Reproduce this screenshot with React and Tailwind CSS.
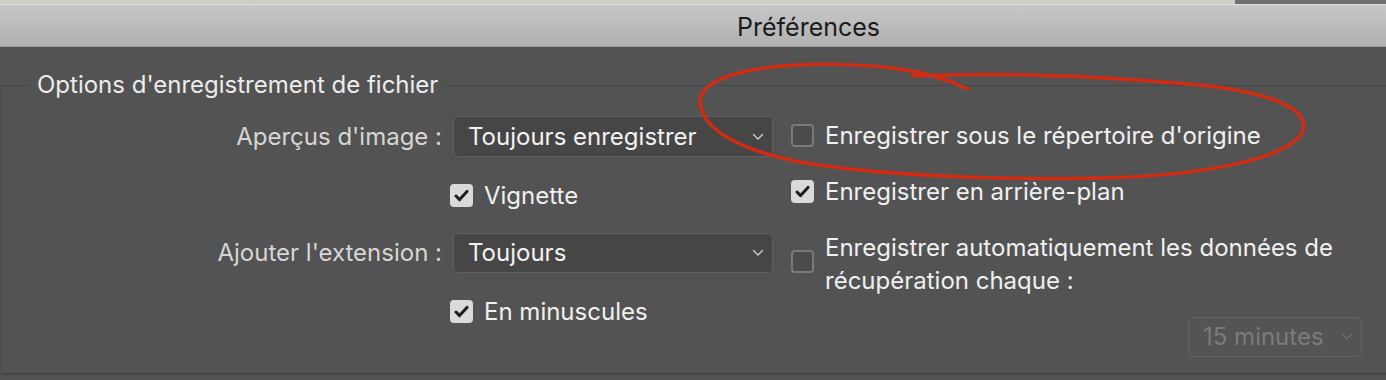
import React from 'react';

const Chevron = ({ className }) => (
  <svg width="12" height="8" viewBox="0 0 12 8" className={className} fill="none">
    <path d="M1.5 1.5l4.5 4.5 4.5-4.5" stroke="currentColor" strokeWidth="1.4" strokeLinecap="round" strokeLinejoin="round" />
  </svg>
);

const Checkbox = ({ checked }) =>
  checked ? (
    <div className="w-[23px] h-[23px] shrink-0 rounded-[4px] bg-[#dadada] flex items-center justify-center">
      <svg width="15" height="13" viewBox="0 0 15 13" fill="none">
        <path d="M2 7l3.6 3.6L13 2.4" stroke="#1e1e1e" strokeWidth="3" strokeLinecap="round" strokeLinejoin="round" />
      </svg>
    </div>
  ) : (
    <div className="w-[23px] h-[23px] shrink-0 rounded-[4px] bg-[#4b4b4b] border-2 border-[#7a7a7a]" />
  );

const Select = ({ value, disabled, className }) => (
  <div
    className={`flex items-center justify-between rounded-[5px] border ${
      disabled ? 'border-[#636363] bg-[#545454] text-[#7b7b7b]' : 'border-[#5f5f5f] bg-[#464646] text-[#f2f2f2]'
    } pl-[14px] pr-[8px] ${className}`}
  >
    <span className="leading-none">{value}</span>
    <Chevron className={disabled ? 'text-[#6c6c6c]' : 'text-[#cfcfcf]'} />
  </div>
);

export default function App() {
  return (
    <div className="relative w-[1386px] h-[380px] overflow-hidden bg-[#535353] font-['Inter','Liberation_Sans',sans-serif] text-[24px]">
      <div className="flex h-[4px]">
        <div className="w-[1235px] bg-[#cfcfca]" />
        <div className="flex-1 bg-[#717171]" />
      </div>
      <div className="h-[43px] border-t border-b border-t-[#e0e0e0] border-b-[#9a9a9a] bg-gradient-to-b from-[#c7c7c7] to-[#b0b0b0] flex items-center pl-[737px] pt-[3px]">
        <span className="text-[#1b1b1b] text-[25px] leading-none">Préférences</span>
      </div>

      <fieldset className="ml-[1px] mt-[23px] w-[1400px] h-[305px] border border-b-2 border-[#454545] p-0 m-0">
        <legend className="ml-[27px] px-[8px] leading-[30px] text-[#ececec] text-[24px]">
          Options d'enregistrement de fichier
        </legend>

        <div className="flex items-start">
          <div className="grid grid-cols-[440px_320px] gap-x-[11px] items-center mt-[16px] text-[24px] leading-[30px]">
            <span className="text-right text-[#d6d6d6]">Aperçus d'image :</span>
            <Select value="Toujours enregistrer" className="h-[41px]" />

            <span />
            <div className="flex items-center gap-[11px] -ml-[3px] h-[23px] mt-[27px] text-[#f0f0f0]">
              <Checkbox checked />
              <span>Vignette</span>
            </div>

            <span className="text-right text-[#d6d6d6] mt-[26px]">Ajouter l'extension :</span>
            <Select value="Toujours" className="h-[40px] mt-[26px]" />

            <span />
            <div className="flex items-center gap-[11px] -ml-[3px] h-[23px] mt-[27px] text-[#f0f0f0]">
              <Checkbox checked />
              <span>En minuscules</span>
            </div>
          </div>

          <div className="ml-[18px] w-[571px] flex flex-col text-[#f0f0f0] text-[24px]">
            <div className="flex items-center gap-[11px] h-[23px] mt-[24px]">
              <Checkbox />
              <span className="whitespace-nowrap">Enregistrer sous le répertoire d'origine</span>
            </div>
            <div className="flex items-center gap-[11px] h-[23px] mt-[33px]">
              <Checkbox checked />
              <span className="whitespace-nowrap">Enregistrer en arrière-plan</span>
            </div>
            <div className="flex items-start gap-[11px] mt-[28px]">
              <div className="mt-[19px]">
                <Checkbox />
              </div>
              <span className="leading-[33px] whitespace-nowrap">
                Enregistrer automatiquement les données de
                <br />
                récupération chaque :
              </span>
            </div>
            <Select value="15 minutes" disabled className="self-end w-[174px] h-[40px] mt-[20px]" />
          </div>
        </div>
      </fieldset>

      <svg className="absolute inset-0 pointer-events-none" width="1386" height="380" viewBox="0 0 1386 380" fill="none">
        <path
          d="M968 89 C948 80 928 73 905 70 C865 63 800 62 752 70 C716 77 700 88 700 102 C702 130 740 150 800 162 C880 176 1000 180 1100 178 C1200 176 1284 160 1302 133 C1312 110 1274 93 1200 85 C1100 76 1000 72 912 76"
          stroke="#d22b12"
          strokeWidth="3.5"
          strokeLinecap="round"
          strokeLinejoin="round"
        />
      </svg>
    </div>
  );
}
